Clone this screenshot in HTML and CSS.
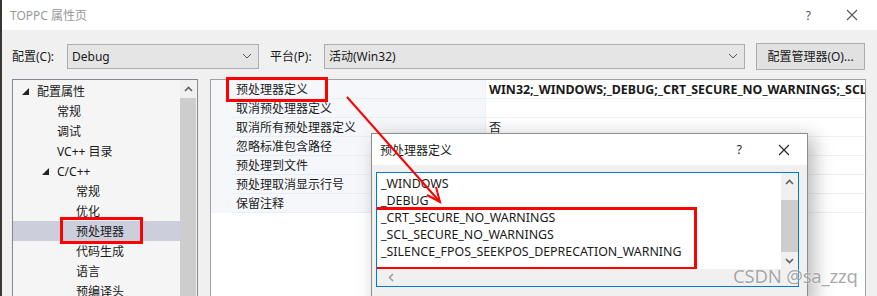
FILE: index.html
```html
<!DOCTYPE html>
<html lang="zh-CN">
<head>
<meta charset="utf-8">
<title>TOPPC 属性页</title>
<link rel="stylesheet" href="styles.css">
</head>
<body>
<div class="page">
  <div class="edge"></div>
  <div class="window">
    <div class="titlebar">
      <span class="title">TOPPC 属性页</span>
      <div class="tb-buttons">
        <span class="tb-help">?</span>
        <svg class="tb-close" width="12" height="12" viewBox="0 0 12 12"><path d="M1 1L11 11M11 1L1 11" stroke="#555" stroke-width="1.1" fill="none"/></svg>
      </div>
    </div>
    <div class="main">
      <div class="toolbar">
        <label class="lbl">配置(C):</label>
        <div class="combo combo-config"><span>Debug</span><svg width="10" height="6" viewBox="0 0 10 6"><path d="M1 1L5 5L9 1" stroke="#555" fill="none"/></svg></div>
        <label class="lbl lbl-platform">平台(P):</label>
        <div class="combo combo-platform"><span>活动(Win32)</span><svg width="10" height="6" viewBox="0 0 10 6"><path d="M1 1L5 5L9 1" stroke="#555" fill="none"/></svg></div>
        <button class="btn">配置管理器(O)...</button>
      </div>
      <div class="content">
        <div class="tree">
          <ul class="tree-list">
            <li class="node lvl0"><svg class="tri" width="7" height="7" viewBox="0 0 7 7"><path d="M7 0V7H0Z" fill="#222"/></svg><span>配置属性</span></li>
            <li class="node lvl1"><span>常规</span></li>
            <li class="node lvl1"><span>调试</span></li>
            <li class="node lvl1"><span>VC++ 目录</span></li>
            <li class="node lvl1b"><svg class="tri" width="7" height="7" viewBox="0 0 7 7"><path d="M7 0V7H0Z" fill="#222"/></svg><span>C/C++</span></li>
            <li class="node lvl2"><span>常规</span></li>
            <li class="node lvl2"><span>优化</span></li>
            <li class="node lvl2 selected"><span class="mark mark-tree">预处理器</span></li>
            <li class="node lvl2"><span>代码生成</span></li>
            <li class="node lvl2"><span>语言</span></li>
            <li class="node lvl2"><span>预编译头</span></li>
          </ul>
          <div class="vscroll">
            <div class="sb-btn"><svg width="9" height="6" viewBox="0 0 9 6"><path d="M1 5L4.5 1.5L8 5" stroke="#606060" stroke-width="1.6" fill="none"/></svg></div>
            <div class="sb-thumb"></div>
          </div>
        </div>
        <div class="grid">
          <div class="row"><div class="gap"></div><div class="name"><span class="mark mark-name">预处理器定义</span></div><div class="val bold">WIN32;_WINDOWS;_DEBUG;_CRT_SECURE_NO_WARNINGS;_SCL_SECURE_NO_WARNINGS</div></div>
          <div class="row"><div class="gap"></div><div class="name">取消预处理器定义</div><div class="val"></div></div>
          <div class="row"><div class="gap"></div><div class="name">取消所有预处理器定义</div><div class="val">否</div></div>
          <div class="row"><div class="gap"></div><div class="name">忽略标准包含路径</div><div class="val"></div></div>
          <div class="row"><div class="gap"></div><div class="name">预处理到文件</div><div class="val"></div></div>
          <div class="row"><div class="gap"></div><div class="name">预处理取消显示行号</div><div class="val"></div></div>
          <div class="row"><div class="gap"></div><div class="name">保留注释</div><div class="val"></div></div>
          <div class="grid-empty"></div>
        </div>
      </div>
    </div>
  </div>

  <div class="dialog">
    <div class="dlg-title">
      <span>预处理器定义</span>
      <div class="tb-buttons dlg-buttons">
        <span class="tb-help">?</span>
        <svg class="tb-close" width="12" height="12" viewBox="0 0 12 12"><path d="M1 1L11 11M11 1L1 11" stroke="#222" stroke-width="1.1" fill="none"/></svg>
      </div>
    </div>
    <div class="dlg-body">
      <div class="textbox">
        <div class="tb-main">
          <div class="lines">
            <div class="line">_WINDOWS</div>
            <div class="line">_DEBUG</div>
            <div class="marked">
              <div class="line">_CRT_SECURE_NO_WARNINGS</div>
              <div class="line">_SCL_SECURE_NO_WARNINGS</div>
              <div class="line">_SILENCE_FPOS_SEEKPOS_DEPRECATION_WARNING</div>
            </div>
          </div>
          <div class="dvscroll">
            <div class="dsb-btn"><svg width="9" height="6" viewBox="0 0 9 6"><path d="M1 5L4.5 1.5L8 5" stroke="#606060" stroke-width="1.6" fill="none"/></svg></div>
            <div class="dsb-thumb"></div>
            <div class="dsb-btn"><svg width="9" height="6" viewBox="0 0 9 6"><path d="M1 1L4.5 4.5L8 1" stroke="#606060" stroke-width="1.6" fill="none"/></svg></div>
          </div>
        </div>
        <div class="hscroll">
          <div class="hsb-btn"><svg width="6" height="9" viewBox="0 0 6 9"><path d="M5 1L1.5 4.5L5 8" stroke="#a0a0a0" stroke-width="1.6" fill="none"/></svg></div>
        </div>
      </div>
    </div>
  </div>

  <svg class="arrow" width="877" height="296" viewBox="0 0 877 296">
    <path d="M347 97L440 202" stroke="#ff0000" stroke-width="2" fill="none"/>
    <path d="M436 187L440 202L427 195" stroke="#ff0000" stroke-width="2" fill="none"/>
  </svg>

  <div class="watermark">CSDN @sa_zzq</div>
</div>
</body>
</html>
```

FILE: styles.css
```css
* { box-sizing: border-box; margin: 0; padding: 0; }
html, body { width: 877px; height: 296px; overflow: hidden; }
body {
  font-family: "Noto Sans", "Noto Sans CJK SC", sans-serif;
  font-size: 12px;
  color: #1a1a1a;
  background: #f0f0f0;
}
.page { position: relative; width: 877px; height: 296px; display: flex; }
.edge { width: 2px; background: #3a3530; flex: none; }
.window { flex: 1; display: flex; flex-direction: column; }

.titlebar {
  height: 30px; background: #fff; display: flex; align-items: center;
  justify-content: space-between; padding-left: 8px; flex: none;
}
.title { color: #999; font-size: 12px; }
.tb-buttons { display: flex; align-items: center; }
.tb-help { font-size: 12px; color: #555; margin-right: 35px; }
.titlebar .tb-close { margin-right: 19px; }

.main { flex: 1; background: #f0f0f0; display: flex; flex-direction: column; }
.toolbar { display: flex; align-items: center; height: 26px; margin-top: 13px; }
.lbl { margin-left: 10px; width: 55px; }
.lbl-platform { margin-left: 11px; width: 54px; }
.combo {
  height: 25px; background: #e5e5e5; border: 1px solid #adadad;
  display: flex; align-items: center; justify-content: space-between;
  padding: 0 6px 0 4px;
}
.combo-config { width: 192px; }
.combo-platform { width: 421px; }
.btn {
  margin-left: 11px; width: 109px; height: 27px; background: #e1e1e1;
  border: 1px solid #adadad; font: inherit; color: #1a1a1a;
}

.content { flex: 1; display: flex; margin-top: 10px; min-height: 0; }
.tree {
  margin-left: 10px; width: 186px; border: 1px solid #828790; border-bottom: none;
  background: #f5f5f5; display: flex;
}
.tree-list { list-style: none; flex: 1; padding-top: 1px; }
.node { height: 20px; display: flex; align-items: center; white-space: nowrap; }
.tri { margin-right: 8px; }
.lvl0 { padding-left: 9px; }
.lvl1 { padding-left: 44px; }
.lvl1b { padding-left: 29px; }
.lvl2 { padding-left: 63px; }
.selected { background: #cccedb; }
.mark { position: relative; }
.mark::after {
  content: ""; position: absolute; border: 3px solid #ff0000; pointer-events: none;
}
.mark-tree::after { left: -16px; right: -19px; top: -5px; bottom: -4px; }
.vscroll { width: 16px; display: flex; flex-direction: column; margin-right: 1px; }
.sb-btn { height: 18px; background: #f0f0f0; display: flex; align-items: center; justify-content: center; }
.sb-thumb { flex: 1; background: #cdcdcd; }

.grid {
  margin-left: 12px; width: 656px; border: 1px solid #a0a0a0; border-bottom: none;
  background: #fff; display: flex; flex-direction: column;
}
.row { height: 19px; display: flex; flex: none; }
.gap { width: 21px; background: #f5f7fb; flex: none; }
.name {
  width: 253px; flex: none; background: #f5f7fb; border-bottom: 1px solid #e9edf5;
  padding-left: 4px; display: flex; align-items: center; white-space: nowrap;
}
.val {
  flex: 1; min-width: 0; border-bottom: 1px solid #eef1f7; border-left: 1px solid #eef1f7;
  padding-left: 3px; display: flex; align-items: center; white-space: nowrap; overflow: hidden;
}
.bold { font-weight: 700; font-size: 12.4px; }
.mark-name::after { left: -10px; right: -20px; top: -3px; bottom: -4px; }
.grid-empty { flex: 1; background: #fff; }

.dialog {
  position: absolute; left: 371px; top: 133px; width: 437px; height: 170px;
  background: #f0f0f0; border: 1px solid #8c8c8c;
  box-shadow: 6px 4px 18px rgba(0,0,0,0.28);
  display: flex; flex-direction: column;
}
.dlg-title {
  height: 31px; background: #fff; display: flex; align-items: center;
  justify-content: space-between; padding-left: 8px; flex: none;
}
.dlg-buttons .tb-help { color: #222; margin-right: 36px; }
.dlg-buttons .tb-close { margin-right: 17px; }
.dlg-body { flex: 1; padding: 7px 8px 0 4px; }
.textbox {
  height: 115px; background: #fff; border: 1px solid #0078d7;
  display: flex; flex-direction: column;
}
.tb-main { flex: 1; display: flex; min-height: 0; }
.lines { flex: 1; padding: 2px 0 0 4px; overflow: hidden; font-size: 12.4px; }
.line { height: 17px; line-height: 17px; white-space: nowrap; }
.marked { position: relative; }
.marked::after {
  content: ""; position: absolute; left: -8px; top: -2px; width: 318px; height: 57px;
  border: 3px solid #ff0000;
}
.dvscroll { width: 17px; background: #f0f0f0; display: flex; flex-direction: column; }
.dsb-btn { height: 17px; display: flex; align-items: center; justify-content: center; }
.dsb-thumb { flex: 1; background: #cdcdcd; margin: 10px 0 0; }
.hscroll { height: 17px; background: #f0f0f0; display: flex; align-items: center; }
.hsb-btn { width: 17px; display: flex; justify-content: center; margin-left: 5px; }

.arrow { position: absolute; left: 0; top: 0; pointer-events: none; }
.watermark {
  position: absolute; left: 733px; top: 263px; font-size: 18.5px;
  font-family: "Noto Sans", sans-serif; color: rgba(130,130,130,0.7);
  text-shadow: 0 0 2px #fff; letter-spacing: -0.2px;
}
```
